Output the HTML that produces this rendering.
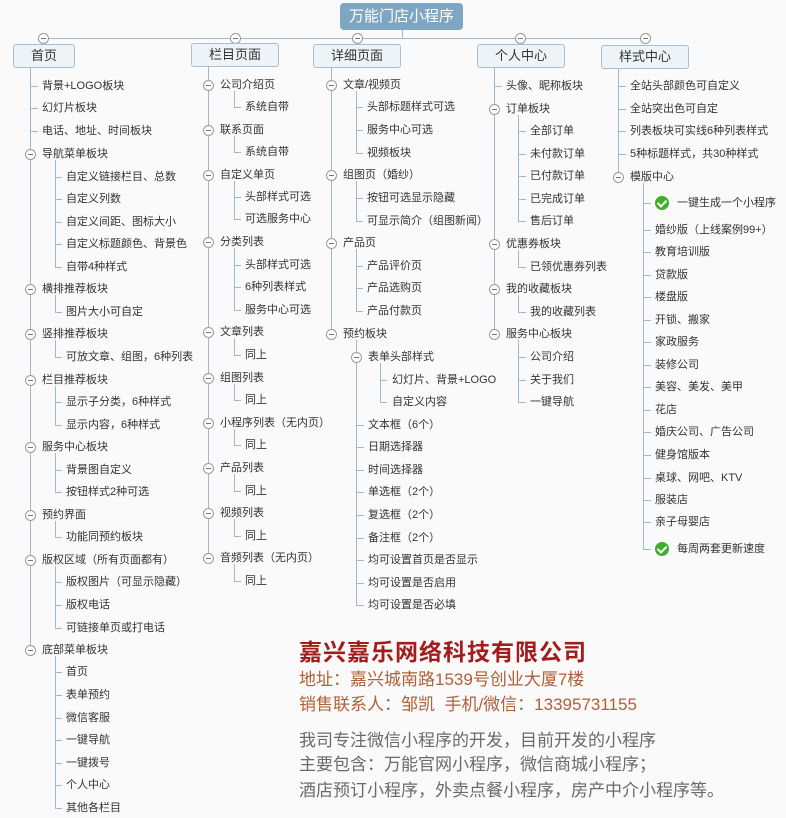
<!DOCTYPE html>
<html><head><meta charset="utf-8"><style>
body{margin:0;width:786px;height:818px;background:#fafafa;position:relative;overflow:hidden;font-family:"Liberation Sans","Noto Sans CJK SC",sans-serif;}
.t{position:absolute;font-size:11px;line-height:14px;white-space:nowrap;color:#333;}
.v{position:absolute;width:1px;background:#9fb8cc;}
.h{position:absolute;height:1px;background:#9fb8cc;}
.c{position:absolute;width:9px;height:9px;border:1px solid #9a9a9a;border-radius:50%;background:#fff;}
.c::after{content:"";position:absolute;left:2px;top:4px;width:5px;height:1px;background:#777;}
.b{position:absolute;height:22px;border:1px solid #a9bfd1;border-radius:3px;background:#eef3f8;font-size:13px;line-height:22px;text-align:center;color:#333;}
.ck{position:absolute;width:14px;height:14px;border-radius:50%;background:#3fae2a;}
.ck::after{content:"";position:absolute;left:4px;top:2px;width:4px;height:7px;border:solid #fff;border-width:0 2px 2px 0;transform:rotate(45deg);}
.co{position:absolute;left:299px;white-space:nowrap;}
</style></head><body>
<div style="position:absolute;left:340px;top:3px;width:123px;height:27px;background:#7ea6c3;border-radius:4px;color:#fff;font-size:15px;line-height:27px;text-align:center">万能门店小程序</div>
<div class="v" style="left:402px;top:30px;height:8px"></div>
<div class="h" style="left:43px;top:38px;width:602px"></div>
<div class="v" style="left:43px;top:38px;height:6px"></div><div class="v" style="left:235px;top:38px;height:6px"></div><div class="v" style="left:357px;top:38px;height:6px"></div><div class="v" style="left:520px;top:38px;height:6px"></div><div class="v" style="left:645px;top:38px;height:6px"></div>
<div class="c" style="left:38px;top:33px"></div><div class="c" style="left:230px;top:33px"></div><div class="c" style="left:352px;top:33px"></div><div class="c" style="left:515px;top:33px"></div><div class="c" style="left:640px;top:33px"></div>
<div class="b" style="left:13px;top:44px;width:60px">首页</div>
<div class="b" style="left:191px;top:43px;width:86px">栏目页面</div>
<div class="b" style="left:313px;top:44px;width:86px">详细页面</div>
<div class="b" style="left:477px;top:44px;width:86px">个人中心</div>
<div class="b" style="left:601px;top:45px;width:86px">样式中心</div>

<div class="v" style="left:30px;top:67px;height:583px"></div>
<div class="h" style="left:30px;top:86px;width:8px"></div><div class="t" style="left:42px;top:79px">背景+LOGO板块</div>
<div class="h" style="left:30px;top:108px;width:8px"></div><div class="t" style="left:42px;top:101px">幻灯片板块</div>
<div class="h" style="left:30px;top:131px;width:8px"></div><div class="t" style="left:42px;top:124px">电话、地址、时间板块</div>
<div class="c" style="left:25px;top:149px"></div><div class="t" style="left:42px;top:147px">导航菜单板块</div>
<div class="v" style="left:55px;top:160px;height:107px"></div>
<div class="h" style="left:55px;top:177px;width:7px"></div><div class="t" style="left:66px;top:170px">自定义链接栏目、总数</div>
<div class="h" style="left:55px;top:199px;width:7px"></div><div class="t" style="left:66px;top:192px">自定义列数</div>
<div class="h" style="left:55px;top:222px;width:7px"></div><div class="t" style="left:66px;top:215px">自定义间距、图标大小</div>
<div class="h" style="left:55px;top:244px;width:7px"></div><div class="t" style="left:66px;top:237px">自定义标题颜色、背景色</div>
<div class="h" style="left:55px;top:267px;width:7px"></div><div class="t" style="left:66px;top:260px">自带4种样式</div>
<div class="c" style="left:25px;top:284px"></div><div class="t" style="left:42px;top:282px">横排推荐板块</div>
<div class="v" style="left:55px;top:295px;height:17px"></div>
<div class="h" style="left:55px;top:312px;width:7px"></div><div class="t" style="left:66px;top:305px">图片大小可自定</div>
<div class="c" style="left:25px;top:329px"></div><div class="t" style="left:42px;top:327px">竖排推荐板块</div>
<div class="v" style="left:55px;top:340px;height:17px"></div>
<div class="h" style="left:55px;top:357px;width:7px"></div><div class="t" style="left:66px;top:350px">可放文章、组图，6种列表</div>
<div class="c" style="left:25px;top:375px"></div><div class="t" style="left:42px;top:373px">栏目推荐板块</div>
<div class="v" style="left:55px;top:386px;height:39px"></div>
<div class="h" style="left:55px;top:402px;width:7px"></div><div class="t" style="left:66px;top:395px">显示子分类，6种样式</div>
<div class="h" style="left:55px;top:425px;width:7px"></div><div class="t" style="left:66px;top:418px">显示内容，6种样式</div>
<div class="c" style="left:25px;top:442px"></div><div class="t" style="left:42px;top:440px">服务中心板块</div>
<div class="v" style="left:55px;top:453px;height:39px"></div>
<div class="h" style="left:55px;top:470px;width:7px"></div><div class="t" style="left:66px;top:463px">背景图自定义</div>
<div class="h" style="left:55px;top:492px;width:7px"></div><div class="t" style="left:66px;top:485px">按钮样式2种可选</div>
<div class="c" style="left:25px;top:510px"></div><div class="t" style="left:42px;top:508px">预约界面</div>
<div class="v" style="left:55px;top:521px;height:16px"></div>
<div class="h" style="left:55px;top:537px;width:7px"></div><div class="t" style="left:66px;top:530px">功能同预约板块</div>
<div class="c" style="left:25px;top:555px"></div><div class="t" style="left:42px;top:553px">版权区域（所有页面都有）</div>
<div class="v" style="left:55px;top:566px;height:62px"></div>
<div class="h" style="left:55px;top:582px;width:7px"></div><div class="t" style="left:66px;top:575px">版权图片（可显示隐藏）</div>
<div class="h" style="left:55px;top:605px;width:7px"></div><div class="t" style="left:66px;top:598px">版权电话</div>
<div class="h" style="left:55px;top:628px;width:7px"></div><div class="t" style="left:66px;top:621px">可链接单页或打电话</div>
<div class="c" style="left:25px;top:645px"></div><div class="t" style="left:42px;top:643px">底部菜单板块</div>
<div class="v" style="left:55px;top:656px;height:152px"></div>
<div class="h" style="left:55px;top:672px;width:7px"></div><div class="t" style="left:66px;top:665px">首页</div>
<div class="h" style="left:55px;top:695px;width:7px"></div><div class="t" style="left:66px;top:688px">表单预约</div>
<div class="h" style="left:55px;top:718px;width:7px"></div><div class="t" style="left:66px;top:711px">微信客服</div>
<div class="h" style="left:55px;top:740px;width:7px"></div><div class="t" style="left:66px;top:733px">一键导航</div>
<div class="h" style="left:55px;top:763px;width:7px"></div><div class="t" style="left:66px;top:756px">一键拨号</div>
<div class="h" style="left:55px;top:785px;width:7px"></div><div class="t" style="left:66px;top:778px">个人中心</div>
<div class="h" style="left:55px;top:808px;width:7px"></div><div class="t" style="left:66px;top:801px">其他各栏目</div>

<div class="v" style="left:208px;top:66px;height:492px"></div>
<div class="c" style="left:203px;top:80px"></div><div class="t" style="left:220px;top:78px">公司介绍页</div>
<div class="v" style="left:234px;top:91px;height:16px"></div><div class="h" style="left:234px;top:107px;width:7px"></div><div class="t" style="left:245px;top:100px">系统自带</div>
<div class="c" style="left:203px;top:125px"></div><div class="t" style="left:220px;top:123px">联系页面</div>
<div class="v" style="left:234px;top:136px;height:16px"></div><div class="h" style="left:234px;top:152px;width:7px"></div><div class="t" style="left:245px;top:145px">系统自带</div>
<div class="c" style="left:203px;top:170px"></div><div class="t" style="left:220px;top:168px">自定义单页</div>
<div class="v" style="left:234px;top:181px;height:38px"></div>
<div class="h" style="left:234px;top:197px;width:7px"></div><div class="t" style="left:245px;top:190px">头部样式可选</div>
<div class="h" style="left:234px;top:219px;width:7px"></div><div class="t" style="left:245px;top:212px">可选服务中心</div>
<div class="c" style="left:203px;top:237px"></div><div class="t" style="left:220px;top:235px">分类列表</div>
<div class="v" style="left:234px;top:248px;height:62px"></div>
<div class="h" style="left:234px;top:265px;width:7px"></div><div class="t" style="left:245px;top:258px">头部样式可选</div>
<div class="h" style="left:234px;top:287px;width:7px"></div><div class="t" style="left:245px;top:280px">6种列表样式</div>
<div class="h" style="left:234px;top:310px;width:7px"></div><div class="t" style="left:245px;top:303px">服务中心可选</div>
<div class="c" style="left:203px;top:327px"></div><div class="t" style="left:220px;top:325px">文章列表</div>
<div class="v" style="left:234px;top:338px;height:17px"></div><div class="h" style="left:234px;top:355px;width:7px"></div><div class="t" style="left:245px;top:348px">同上</div>
<div class="c" style="left:203px;top:373px"></div><div class="t" style="left:220px;top:371px">组图列表</div>
<div class="v" style="left:234px;top:384px;height:16px"></div><div class="h" style="left:234px;top:400px;width:7px"></div><div class="t" style="left:245px;top:393px">同上</div>
<div class="c" style="left:203px;top:418px"></div><div class="t" style="left:220px;top:416px">小程序列表（无内页）</div>
<div class="v" style="left:234px;top:429px;height:16px"></div><div class="h" style="left:234px;top:445px;width:7px"></div><div class="t" style="left:245px;top:438px">同上</div>
<div class="c" style="left:203px;top:463px"></div><div class="t" style="left:220px;top:461px">产品列表</div>
<div class="v" style="left:234px;top:474px;height:17px"></div><div class="h" style="left:234px;top:491px;width:7px"></div><div class="t" style="left:245px;top:484px">同上</div>
<div class="c" style="left:203px;top:508px"></div><div class="t" style="left:220px;top:506px">视频列表</div>
<div class="v" style="left:234px;top:519px;height:17px"></div><div class="h" style="left:234px;top:536px;width:7px"></div><div class="t" style="left:245px;top:529px">同上</div>
<div class="c" style="left:203px;top:553px"></div><div class="t" style="left:220px;top:551px">音频列表（无内页）</div>
<div class="v" style="left:234px;top:564px;height:17px"></div><div class="h" style="left:234px;top:581px;width:7px"></div><div class="t" style="left:245px;top:574px">同上</div>

<div class="v" style="left:331px;top:67px;height:267px"></div>
<div class="c" style="left:326px;top:80px"></div><div class="t" style="left:343px;top:78px">文章/视频页</div>
<div class="v" style="left:356px;top:91px;height:62px"></div>
<div class="h" style="left:356px;top:107px;width:7px"></div><div class="t" style="left:367px;top:100px">头部标题样式可选</div>
<div class="h" style="left:356px;top:130px;width:7px"></div><div class="t" style="left:367px;top:123px">服务中心可选</div>
<div class="h" style="left:356px;top:153px;width:7px"></div><div class="t" style="left:367px;top:146px">视频板块</div>
<div class="c" style="left:326px;top:170px"></div><div class="t" style="left:343px;top:168px">组图页（婚纱）</div>
<div class="v" style="left:356px;top:181px;height:40px"></div>
<div class="h" style="left:356px;top:198px;width:7px"></div><div class="t" style="left:367px;top:191px">按钮可选显示隐藏</div>
<div class="h" style="left:356px;top:221px;width:7px"></div><div class="t" style="left:367px;top:214px">可显示简介（组图新闻）</div>
<div class="c" style="left:326px;top:238px"></div><div class="t" style="left:343px;top:236px">产品页</div>
<div class="v" style="left:356px;top:249px;height:62px"></div>
<div class="h" style="left:356px;top:266px;width:7px"></div><div class="t" style="left:367px;top:259px">产品评价页</div>
<div class="h" style="left:356px;top:288px;width:7px"></div><div class="t" style="left:367px;top:281px">产品选购页</div>
<div class="h" style="left:356px;top:311px;width:7px"></div><div class="t" style="left:367px;top:304px">产品付款页</div>
<div class="c" style="left:326px;top:329px"></div><div class="t" style="left:343px;top:327px">预约板块</div>
<div class="v" style="left:356px;top:340px;height:265px"></div>
<div class="c" style="left:351px;top:352px"></div><div class="t" style="left:368px;top:350px">表单头部样式</div>
<div class="v" style="left:380px;top:363px;height:39px"></div>
<div class="h" style="left:380px;top:380px;width:7px"></div><div class="t" style="left:392px;top:373px">幻灯片、背景+LOGO</div>
<div class="h" style="left:380px;top:402px;width:7px"></div><div class="t" style="left:392px;top:395px">自定义内容</div>
<div class="h" style="left:356px;top:425px;width:8px"></div><div class="t" style="left:368px;top:418px">文本框（6个）</div>
<div class="h" style="left:356px;top:447px;width:8px"></div><div class="t" style="left:368px;top:440px">日期选择器</div>
<div class="h" style="left:356px;top:470px;width:8px"></div><div class="t" style="left:368px;top:463px">时间选择器</div>
<div class="h" style="left:356px;top:492px;width:8px"></div><div class="t" style="left:368px;top:485px">单选框（2个）</div>
<div class="h" style="left:356px;top:515px;width:8px"></div><div class="t" style="left:368px;top:508px">复选框（2个）</div>
<div class="h" style="left:356px;top:538px;width:8px"></div><div class="t" style="left:368px;top:531px">备注框（2个）</div>
<div class="h" style="left:356px;top:560px;width:8px"></div><div class="t" style="left:368px;top:553px">均可设置首页是否显示</div>
<div class="h" style="left:356px;top:583px;width:8px"></div><div class="t" style="left:368px;top:576px">均可设置是否启用</div>
<div class="h" style="left:356px;top:605px;width:8px"></div><div class="t" style="left:368px;top:598px">均可设置是否必填</div>

<div class="v" style="left:494px;top:67px;height:267px"></div>
<div class="h" style="left:494px;top:86px;width:8px"></div><div class="t" style="left:506px;top:79px">头像、昵称板块</div>
<div class="c" style="left:489px;top:104px"></div><div class="t" style="left:506px;top:102px">订单板块</div>
<div class="v" style="left:518px;top:115px;height:106px"></div>
<div class="h" style="left:518px;top:131px;width:8px"></div><div class="t" style="left:530px;top:124px">全部订单</div>
<div class="h" style="left:518px;top:154px;width:8px"></div><div class="t" style="left:530px;top:147px">未付款订单</div>
<div class="h" style="left:518px;top:176px;width:8px"></div><div class="t" style="left:530px;top:169px">已付款订单</div>
<div class="h" style="left:518px;top:199px;width:8px"></div><div class="t" style="left:530px;top:192px">已完成订单</div>
<div class="h" style="left:518px;top:221px;width:8px"></div><div class="t" style="left:530px;top:214px">售后订单</div>
<div class="c" style="left:489px;top:239px"></div><div class="t" style="left:506px;top:237px">优惠券板块</div>
<div class="v" style="left:518px;top:250px;height:17px"></div><div class="h" style="left:518px;top:267px;width:8px"></div><div class="t" style="left:530px;top:260px">已领优惠券列表</div>
<div class="c" style="left:489px;top:284px"></div><div class="t" style="left:506px;top:282px">我的收藏板块</div>
<div class="v" style="left:518px;top:295px;height:17px"></div><div class="h" style="left:518px;top:312px;width:8px"></div><div class="t" style="left:530px;top:305px">我的收藏列表</div>
<div class="c" style="left:489px;top:329px"></div><div class="t" style="left:506px;top:327px">服务中心板块</div>
<div class="v" style="left:518px;top:340px;height:62px"></div>
<div class="h" style="left:518px;top:357px;width:8px"></div><div class="t" style="left:530px;top:350px">公司介绍</div>
<div class="h" style="left:518px;top:380px;width:8px"></div><div class="t" style="left:530px;top:373px">关于我们</div>
<div class="h" style="left:518px;top:402px;width:8px"></div><div class="t" style="left:530px;top:395px">一键导航</div>

<div class="v" style="left:618px;top:68px;height:109px"></div>
<div class="h" style="left:618px;top:86px;width:8px"></div><div class="t" style="left:630px;top:79px">全站头部颜色可自定义</div>
<div class="h" style="left:618px;top:109px;width:8px"></div><div class="t" style="left:630px;top:102px">全站突出色可自定</div>
<div class="h" style="left:618px;top:131px;width:8px"></div><div class="t" style="left:630px;top:124px">列表板块可实线6种列表样式</div>
<div class="h" style="left:618px;top:154px;width:8px"></div><div class="t" style="left:630px;top:147px">5种标题样式，共30种样式</div>
<div class="c" style="left:613px;top:172px"></div><div class="t" style="left:630px;top:170px">模版中心</div>
<div class="v" style="left:643px;top:183px;height:366px"></div>
<div class="h" style="left:643px;top:203px;width:8px"></div><div class="ck" style="left:655px;top:196px"></div><div class="t" style="left:677px;top:196px">一键生成一个小程序</div>
<div class="h" style="left:643px;top:230px;width:8px"></div><div class="t" style="left:655px;top:223px">婚纱版（上线案例99+）</div>
<div class="h" style="left:643px;top:252px;width:8px"></div><div class="t" style="left:655px;top:245px">教育培训版</div>
<div class="h" style="left:643px;top:275px;width:8px"></div><div class="t" style="left:655px;top:268px">贷款版</div>
<div class="h" style="left:643px;top:297px;width:8px"></div><div class="t" style="left:655px;top:290px">楼盘版</div>
<div class="h" style="left:643px;top:320px;width:8px"></div><div class="t" style="left:655px;top:313px">开锁、搬家</div>
<div class="h" style="left:643px;top:342px;width:8px"></div><div class="t" style="left:655px;top:335px">家政服务</div>
<div class="h" style="left:643px;top:365px;width:8px"></div><div class="t" style="left:655px;top:358px">装修公司</div>
<div class="h" style="left:643px;top:387px;width:8px"></div><div class="t" style="left:655px;top:380px">美容、美发、美甲</div>
<div class="h" style="left:643px;top:410px;width:8px"></div><div class="t" style="left:655px;top:403px">花店</div>
<div class="h" style="left:643px;top:432px;width:8px"></div><div class="t" style="left:655px;top:425px">婚庆公司、广告公司</div>
<div class="h" style="left:643px;top:455px;width:8px"></div><div class="t" style="left:655px;top:448px">健身馆版本</div>
<div class="h" style="left:643px;top:478px;width:8px"></div><div class="t" style="left:655px;top:471px">桌球、网吧、KTV</div>
<div class="h" style="left:643px;top:500px;width:8px"></div><div class="t" style="left:655px;top:493px">服装店</div>
<div class="h" style="left:643px;top:522px;width:8px"></div><div class="t" style="left:655px;top:515px">亲子母婴店</div>
<div class="h" style="left:643px;top:549px;width:8px"></div><div class="ck" style="left:655px;top:542px"></div><div class="t" style="left:677px;top:542px">每周两套更新速度</div>

<div class="co" style="top:637px;font-size:23px;line-height:30px;font-weight:bold;color:#a31d1d;letter-spacing:1px">嘉兴嘉乐网络科技有限公司</div>
<div class="co" style="top:669px;font-size:17px;line-height:22px;color:#b0603a">地址：嘉兴城南路1539号创业大厦7楼</div>
<div class="co" style="top:694px;font-size:17px;line-height:22px;color:#b0603a">销售联系人：邹凯&nbsp; 手机/微信：13395731155</div>
<div class="co" style="top:730px;font-size:17px;line-height:22px;color:#6a6a6a">我司专注微信小程序的开发，目前开发的小程序</div>
<div class="co" style="top:754px;font-size:17px;line-height:22px;color:#6a6a6a">主要包含：万能官网小程序，微信商城小程序；</div>
<div class="co" style="top:780px;font-size:17px;line-height:22px;color:#6a6a6a">酒店预订小程序，外卖点餐小程序，房产中介小程序等。</div>
</body></html>
